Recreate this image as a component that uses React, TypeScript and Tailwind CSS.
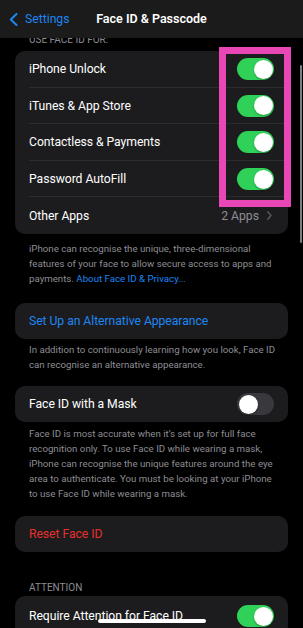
import React from "react";

const Toggle = ({ on }: { on: boolean }) => (
  <div
    className={
      on
        ? "w-[37px] h-[22px] rounded-full bg-[#30d158] p-[1.5px] flex justify-end shrink-0"
        : "w-[37px] h-[22px] rounded-full bg-[#39393d] p-[1.5px] flex justify-start shrink-0"
    }
  >
    <div className="w-[19px] h-[19px] rounded-full bg-white shadow-[0_1px_2px_rgba(0,0,0,0.3)]" />
  </div>
);

const Row = ({
  label,
  last,
  right,
}: {
  label: string;
  last?: boolean;
  right?: React.ReactNode;
}) => (
  <div className="h-[36.6px] flex items-center pl-[14px] relative">
    <div className="flex-1 flex items-center pr-[14px] h-full">
      <span className="flex-1 text-white text-[12.2px] tracking-[-0.05px]">{label}</span>
      {right}
    </div>
    {!last && <div className="absolute left-[14px] right-0 bottom-0 h-px bg-[#2c2c2e]" />}
  </div>
);

export default function App() {
  return (
    <div
      className="relative w-[303px] h-[628px] overflow-hidden bg-black"
      style={{ fontFamily: "Roboto, 'Noto Sans', sans-serif" }}
    >
      {/* nav */}
      <div className="absolute top-0 left-0 right-0 h-[38px] bg-[#1b1b1b] z-10 flex items-center justify-center">
        <div className="absolute left-[9px] top-0 h-full flex items-center gap-[7px]">
          <svg width="9" height="13" viewBox="0 0 9 13" fill="none">
            <path d="M7.5 1L1.8 6.5L7.5 12" stroke="#1c86f2" strokeWidth="2" strokeLinecap="round" strokeLinejoin="round" />
          </svg>
          <span className="text-[12.2px] text-[#1c86f2]">Settings</span>
        </div>
        <span className="text-white text-[12.5px] font-semibold">Face ID &amp; Passcode</span>
      </div>

      <div className="pt-[34px] flex flex-col">
        <div className="px-[29px] text-[10px] leading-[12px] text-[#8d8d93] uppercase">Use Face ID for:</div>

        <div className="mt-[5px] mx-[15px] rounded-[10px] bg-[#1c1c1e] flex flex-col">
          <Row label="iPhone Unlock" right={<Toggle on />} />
          <Row label="iTunes & App Store" right={<Toggle on />} />
          <Row label="Contactless & Payments" right={<Toggle on />} />
          <Row label="Password AutoFill" right={<Toggle on />} />
          <Row
            label="Other Apps"
            last
            right={
              <div className="flex items-center gap-[8px] text-[#8d8d93] text-[12.2px] mr-[2px]">
                <span>2 Apps</span>
                <svg width="5" height="9" viewBox="0 0 5 9" fill="none">
                  <path d="M0.8 0.8L4 4.5L0.8 8.2" stroke="#5a5a5e" strokeWidth="1.4" strokeLinecap="round" strokeLinejoin="round" />
                </svg>
              </div>
            }
          />
        </div>

        <p className="mt-[7.5px] pl-[29px] pr-[25px] text-[9.7px] leading-[15px] text-[#8d8d93]">
          iPhone can recognise the unique, three-dimensional features of your face to allow secure access to apps and
          payments. <span className="text-[#1c86f2]">About Face ID &amp; Privacy...</span>
        </p>

        <div className="mt-[17px] mx-[15px] rounded-[10px] bg-[#1c1c1e] h-[36px] flex items-center pl-[14px]">
          <span className="text-[#1c86f2] text-[12.2px] tracking-[-0.05px]">Set Up an Alternative Appearance</span>
        </div>

        <p className="mt-[3px] pl-[29px] pr-[25px] text-[9.7px] leading-[15px] text-[#8d8d93]">
          In addition to continuously learning how you look, Face ID can recognise an alternative appearance.
        </p>

        <div className="mt-[14px] mx-[15px] rounded-[10px] bg-[#1c1c1e] h-[36px] flex items-center pl-[14px] pr-[14px]">
          <span className="flex-1 text-white text-[12.2px] tracking-[-0.05px]">Face ID with a Mask</span>
          <Toggle on={false} />
        </div>

        <p className="mt-[3.5px] pl-[29px] pr-[25px] text-[9.7px] leading-[15px] text-[#8d8d93]">
          Face ID is most accurate when it’s set up for full face recognition only. To use Face ID while wearing a mask,
          iPhone can recognise the unique features around the eye area to authenticate. You must be looking at your
          iPhone to use Face ID while wearing a mask.
        </p>

        <div className="mt-[15.5px] mx-[15px] rounded-[10px] bg-[#1c1c1e] h-[36px] flex items-center pl-[14px]">
          <span className="text-[#e5302c] text-[12.2px] tracking-[-0.05px]">Reset Face ID</span>
        </div>

        <div className="mt-[30px] px-[29px] text-[10px] leading-[12px] text-[#8d8d93] uppercase">Attention</div>

        <div className="mt-[2px] mx-[15px] rounded-[10px] bg-[#1c1c1e] h-[40px] flex items-center pl-[14px] pr-[14px]">
          <span className="flex-1 text-white text-[12.2px] tracking-[-0.05px]">Require Attention for Face ID</span>
          <Toggle on />
        </div>
      </div>

      {/* pink annotation box */}
      <div className="absolute left-[219px] top-[47px] w-[72px] h-[160px] border-[7px] border-[#e946b6]" />

      {/* scroll indicator */}
      <div className="absolute left-[299.5px] top-[65px] w-[2.5px] h-[178px] rounded-full bg-[#7e7e82]" />

      {/* home indicator */}
      <div className="absolute left-[98px] top-[619px] w-[108px] h-[3.5px] rounded-full bg-white" />
    </div>
  );
}
